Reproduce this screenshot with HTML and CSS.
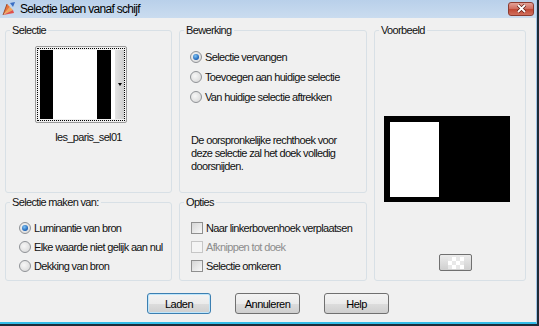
FILE: index.html
```html
<!DOCTYPE html>
<html>
<head>
  <title>Selectie laden vanaf schijf</title>
  <link rel="stylesheet" href="styles.css">
</head>
<body>
  <div class="window">
    <div class="titlebar">
      <svg class="app-icon" width="16" height="16" viewBox="0 0 16 16">
        <path d="M2 14 L6 3 L9 6 Z" fill="#e8743b"/>
        <path d="M2 14 L9 6 L12 9 Z" fill="#f2a65a"/>
        <path d="M2 14 L12 9 L13 12 Z" fill="#e0504a"/>
        <path d="M9 2 L14 1 L12 6 Z" fill="#3a6fc4"/>
        <path d="M2 14 L6 3" stroke="#8a3a1a" stroke-width="0.8" fill="none"/>
      </svg>
      <span class="title">Selectie laden vanaf schijf</span>
      <span class="close">
        <svg width="13" height="9" viewBox="0 0 13 9">
          <path d="M3 1 L10 8 M10 1 L3 8" stroke="#5a1a12" stroke-width="3.2"/>
          <path d="M3 1 L10 8 M10 1 L3 8" stroke="#fff" stroke-width="1.8"/>
        </svg>
      </span>
    </div>

    <div class="content">
      <div class="groups">
        <fieldset class="group selectie">
          <legend>Selectie</legend>
          <div class="thumb">
            <div class="thumb-inner">
              <span class="bar black w13"></span>
              <span class="bar white w44"></span>
              <span class="bar black w14"></span>
              <span class="bar white w4"></span>
              <span class="scroll"><span class="arrow"></span></span>
            </div>
          </div>
          <div class="caption">les_paris_sel01</div>
        </fieldset>

        <fieldset class="group bewerking">
          <legend>Bewerking</legend>
          <div class="opts">
            <div class="opt"><span class="radio checked"></span>Selectie vervangen</div>
            <div class="opt"><span class="radio"></span>Toevoegen aan huidige selectie</div>
            <div class="opt"><span class="radio"></span>Van huidige selectie aftrekken</div>
          </div>
          <p class="desc">De oorspronkelijke rechthoek voor<br>deze selectie zal het doek volledig<br>doorsnijden.</p>
        </fieldset>

        <fieldset class="group voorbeeld">
          <legend>Voorbeeld</legend>
          <div class="preview"><div class="preview-white"></div></div>
          <div class="bg-button"><span class="checker"></span></div>
        </fieldset>

        <fieldset class="group maken">
          <legend>Selectie maken van:</legend>
          <div class="opts small">
            <div class="opt"><span class="radio checked"></span>Luminantie van bron</div>
            <div class="opt"><span class="radio"></span>Elke waarde niet gelijk aan nul</div>
            <div class="opt"><span class="radio"></span>Dekking van bron</div>
          </div>
        </fieldset>

        <fieldset class="group opties">
          <legend>Opties</legend>
          <div class="opts small">
            <div class="opt"><span class="check"></span>Naar linkerbovenhoek verplaatsen</div>
            <div class="opt disabled"><span class="check"></span>Afknippen tot doek</div>
            <div class="opt"><span class="check"></span>Selectie omkeren</div>
          </div>
        </fieldset>
      </div>

      <div class="buttons">
        <button class="btn default w64">Laden</button>
        <button class="btn">Annuleren</button>
        <button class="btn">Help</button>
      </div>
    </div>
  </div>
</body>
</html>
```

FILE: styles.css
```css
body {
  margin: 0;
  background-color: #1e2c38;
  font-family: "Liberation Sans", Arial, sans-serif;
  font-size: 11px;
  letter-spacing: -0.65px;
  color: #111;
}

.window {
  width: 536px;
  height: 322px;
  background-color: #f0f0f0;
  border-right: 1px solid #a3c6e6;
  border-bottom: 2px solid #33bde8;
}

/* title bar */
.titlebar {
  height: 18px;
  display: flex;
  align-items: center;
  background: linear-gradient(#b9d0ea, #cadcef);
}

.app-icon {
  margin-left: 1px;
  margin-right: 3px;
}

.title {
  font-size: 12px;
  letter-spacing: -0.7px;
  color: #000;
  flex: 1;
}

.close {
  width: 24px;
  height: 12px;
  margin-right: 2px;
  margin-bottom: 1px;
  display: flex;
  align-items: center;
  justify-content: center;
  border: 1px solid #8c3b30;
  border-radius: 3px;
  background: linear-gradient(#e3a197, #cf6a5c 50%, #c04632 51%, #d0705e);
}

/* groups */
.content {
  padding: 6px 0 0 5px;
}

.groups {
  display: grid;
  grid-template-columns: 167px 188px 152px;
  grid-template-rows: 169px 85px;
  column-gap: 7px;
  row-gap: 3px;
}

.group {
  margin: 0;
  padding: 0;
  min-width: 0;
  border: 1px solid #d8e0e6;
  border-radius: 3px;
}

.group legend {
  margin-left: 4px;
  padding: 0 2px;
  line-height: 12px;
}

.voorbeeld {
  grid-column: 3;
  grid-row: 1 / span 2;
}

/* selectie thumbnail */
.thumb {
  width: 88px;
  height: 73px;
  margin: 10px 0 0 29px;
  border: 1px solid #9a9a9a;
  border-radius: 2px;
  padding: 1px;
}

.thumb-inner {
  border: 1px dotted #000;
  display: flex;
  padding: 1px 0 1px 2px;
  box-sizing: border-box;
  height: 100%;
}

.bar { display: block; }
.black { background-color: #000; }
.white { background-color: #fff; }
.w13 { width: 13px; }
.w44 { width: 44px; }
.w14 { width: 14px; }
.w4 { width: 4px; }

.scroll {
  flex: 1;
  background: linear-gradient(90deg, #e4e4e4, #cfcfcf);
  display: flex;
  align-items: center;
  justify-content: center;
}

.arrow {
  width: 0;
  height: 0;
  border-left: 2px solid transparent;
  border-right: 2px solid transparent;
  border-top: 3px solid #000;
}

.caption {
  text-align: center;
  line-height: 13px;
  margin-top: 8px;
}

/* options */
.opts {
  margin-top: 11px;
  padding-left: 10px;
}

.opt {
  display: flex;
  align-items: center;
  gap: 3px;
  height: 20px;
}

.small {
  margin-top: 10px;
}

.small .opt {
  height: 19px;
}

.maken .opts {
  padding-left: 13px;
}

.opties .opts {
  padding-left: 11px;
}

.radio {
  width: 10px;
  height: 10px;
  border: 1px solid #8f9296;
  border-radius: 50%;
  background: radial-gradient(circle at 40% 40%, #f7f7f7, #d4d4d4);
  flex-shrink: 0;
  display: flex;
  align-items: center;
  justify-content: center;
}

.radio.checked::after {
  content: "";
  width: 6px;
  height: 6px;
  border-radius: 50%;
  background: radial-gradient(circle at 40% 35%, #7fc4f5, #1a5fb4 70%);
}

.check {
  width: 10px;
  height: 10px;
  border: 1px solid #8f8f8f;
  background: linear-gradient(135deg, #d6d6d6, #f8f8f8);
  flex-shrink: 0;
}

.disabled {
  color: #8d8d8d;
}

.disabled .check {
  border-color: #c6c6c6;
  background: #f4f4f4;
}

.desc {
  margin: 27px 0 0 11px;
  line-height: 13px;
}

/* preview */
.preview {
  width: 126px;
  height: 86px;
  margin: 80px 0 0 9px;
  background-color: #000;
  padding: 6px 0 0 6px;
  box-sizing: border-box;
}

.preview-white {
  width: 49px;
  height: 75px;
  background-color: #fff;
}

.bg-button {
  width: 31px;
  height: 15px;
  margin: 52px 0 0 64px;
  border: 1px solid #707070;
  border-radius: 2px;
  background: linear-gradient(#ececec, #cfcfcf);
  display: flex;
  align-items: center;
  justify-content: center;
}

.checker {
  width: 16px;
  height: 12px;
  background-color: #e8e8e8;
  background-image:
    linear-gradient(45deg, #fff 25%, transparent 25%, transparent 75%, #fff 75%),
    linear-gradient(45deg, #fff 25%, transparent 25%, transparent 75%, #fff 75%);
  background-size: 8px 8px;
  background-position: 0 0, 4px 4px;
}

/* dialog buttons */
.buttons {
  display: flex;
  justify-content: center;
  gap: 24px;
  margin-top: 12px;
  padding-right: 5px;
}

.btn {
  width: 65px;
  height: 21px;
  padding: 0;
  font-family: "Liberation Sans", Arial, sans-serif;
  font-size: 11px;
  letter-spacing: -0.5px;
  color: #000;
  border: 1px solid #707070;
  border-radius: 3px;
  background: linear-gradient(#f3f3f3, #ebebeb 50%, #dddddd 51%, #cfcfcf);
}

.btn.default {
  border-color: #3c7fb1;
  box-shadow: inset 0 0 0 1px #bfe6fb;
}

.w64 {
  width: 64px;
}
```
